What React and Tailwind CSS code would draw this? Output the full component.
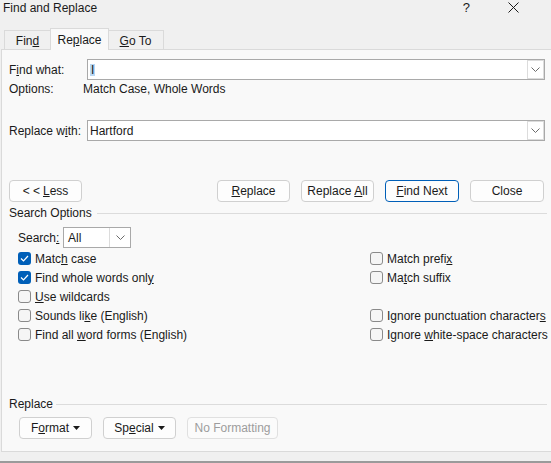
import React from 'react';

const font = { fontFamily: '"Liberation Sans", Arial, sans-serif' };

// little down chevron used in the combo boxes
const Chevron = () => (
  <svg width="9" height="5" viewBox="0 0 9 5" fill="none">
    <polyline points="0.5,0.5 4.5,4.5 8.5,0.5" stroke="#6b6b6b" strokeWidth="1" />
  </svg>
);

const Caret = () => (
  <svg width="7" height="4" viewBox="0 0 7 4" className="ml-[4px]">
    <polygon points="0,0 7,0 3.5,4" fill="#1a1a1a" />
  </svg>
);

const Check = ({ checked, children }) => (
  <div className="flex items-center h-[19px]">
    {checked ? (
      <span className="w-[13px] h-[13px] rounded-[3px] bg-[#005fb8] flex items-center justify-center">
        <svg width="9" height="7" viewBox="0 0 9 7" fill="none">
          <polyline points="1,3.5 3.5,6 8,1" stroke="#ffffff" strokeWidth="1.2" />
        </svg>
      </span>
    ) : (
      <span className="w-[13px] h-[13px] rounded-[3px] border border-[#8a8a8a] bg-[#f5f5f5]" />
    )}
    <span className="ml-[4px]">{children}</span>
  </div>
);

const Btn = ({ w, children, primary, disabled }) => (
  <div
    className={`h-[22px] flex items-center justify-center rounded-[4px] border ${w} ${
      primary
        ? 'border-[#005fb8] bg-[#fdfdfd]'
        : disabled
        ? 'border-[#e0e0e0] bg-[#fbfbfb] text-[#9d9d9d]'
        : 'border-[#d0d0d0] bg-[#fdfdfd]'
    }`}
  >
    {children}
  </div>
);

const Combo = ({ children }) => (
  <div className="w-[458px] h-[21px] border border-[#a9a9a9] bg-white flex items-center">
    <div className="flex-1 pl-[2px] flex items-center">{children}</div>
    <div className="w-[17px] h-[19px] border border-[#dcdcdc] flex items-center justify-center">
      <Chevron />
    </div>
  </div>
);

const Section = ({ title, lineMl }) => (
  <div className="flex items-center h-[16px]">
    <span>{title}</span>
    <div className={`flex-1 h-px bg-[#dcdcdc] mr-[5px] ${lineMl}`} />
  </div>
);

export default function App() {
  return (
    <div className="w-[551px] h-[463px] bg-[#f0f0f0] overflow-hidden flex flex-col text-[12px] text-[#1a1a1a] leading-none" style={font}>
      {/* title bar */}
      <div className="h-[15px] flex items-center pl-[3px]">
        <span className="text-[12px]">Find and Replace</span>
        <span className="ml-auto mr-[38px] text-[13px]">?</span>
        <svg width="11" height="11" viewBox="0 0 11 11" className="mr-[32px]">
          <path d="M0.5 0.5 L10.5 10.5 M10.5 0.5 L0.5 10.5" stroke="#1a1a1a" strokeWidth="1" />
        </svg>
      </div>

      {/* tabs */}
      <div className="mt-[13px] h-[22px] flex items-end pl-[4px]">
        <div className="w-[47px] h-[20px] border border-b-0 border-[#dadada] bg-[#f0f0f0] flex items-center justify-center">
          Fin<u>d</u>
        </div>
        <div className="w-[59px] h-[22px] -ml-px border border-b-0 border-[#dadada] bg-[#f9f9f9] flex items-center justify-center relative z-10">
          Re<u>p</u>lace
        </div>
        <div className="w-[56px] h-[20px] -ml-px border border-b-0 border-l-0 border-[#dadada] bg-[#f0f0f0] flex items-center justify-center">
          <u>G</u>o To
        </div>
      </div>

      {/* panel */}
      <div className="-mt-px ml-[1px] w-[560px] h-[403px] border border-[#dadada] bg-[#f9f9f9] pl-[7px] flex flex-col">
        <div className="mt-[9px] flex items-center h-[21px]">
          <span className="w-[78px]">F<u>i</u>nd what:</span>
          <Combo>
            <span className="bg-[#b9d7f3] px-[1px]">I</span>
          </Combo>
        </div>
        <div className="mt-[1px] flex items-center h-[16px]">
          <span className="w-[74px]">Options:</span>
          <span>Match Case, Whole Words</span>
        </div>
        <div className="mt-[23px] flex items-center h-[21px]">
          <span className="w-[78px]">Replace w<u>i</u>th:</span>
          <Combo>
            <span>Hartford</span>
          </Combo>
        </div>

        <div className="mt-[39px] flex items-center w-[535px]">
          <Btn w="w-[73px]">&lt; &lt; <u className="ml-[3px]">L</u>ess</Btn>
          <div className="ml-auto flex gap-[11px]">
            <Btn w="w-[73px]"><u>R</u>eplace</Btn>
            <Btn w="w-[73px]">Replace <u className="ml-[3px]">A</u>ll</Btn>
            <Btn w="w-[74px]" primary><u>F</u>ind Next</Btn>
            <Btn w="w-[74px]">Close</Btn>
          </div>
        </div>

        <div className="mt-[3px] w-[543px]">
          <Section title="Search Options" lineMl="ml-[5px]" />
        </div>

        <div className="mt-[6px] ml-[9px] flex items-center h-[21px]">
          <span className="w-[45px]">Search<u>:</u></span>
          <div className="w-[68px] h-[21px] border border-[#a9a9a9] bg-white flex items-center">
            <span className="flex-1 pl-[4px]">All</span>
            <div className="w-[21px] h-[19px] border-l border-[#dcdcdc] flex items-center justify-center">
              <Chevron />
            </div>
          </div>
        </div>

        <div className="mt-[1px] ml-[9px] grid grid-cols-[352px_1fr]">
          <Check checked>Matc<u>h</u> case</Check>
          <Check>Match prefi<u>x</u></Check>
          <Check checked>Find whole words onl<u>y</u></Check>
          <Check>Ma<u>t</u>ch suffix</Check>
          <Check><u>U</u>se wildcards</Check>
          <div />
          <Check>Sounds li<u>k</u>e (English)</Check>
          <Check>Ignore punctuation character<u>s</u></Check>
          <Check>Find all <u>w</u>ord forms (English)</Check>
          <Check>Ignore <u>w</u>hite-space characters</Check>
        </div>

        <div className="mt-[52px] w-[543px]">
          <Section title="Replace" lineMl="ml-[3px]" />
        </div>

        <div className="mt-[5px] ml-[10px] flex gap-[11px]">
          <Btn w="w-[73px]">F<u>o</u>rmat<Caret /></Btn>
          <Btn w="w-[73px]">Sp<u>e</u>cial<Caret /></Btn>
          <Btn w="w-[91px]" disabled>No Formatting</Btn>
        </div>
      </div>

      <div className="mt-auto h-[2px] bg-[#9a9a9a]" />
    </div>
  );
}
